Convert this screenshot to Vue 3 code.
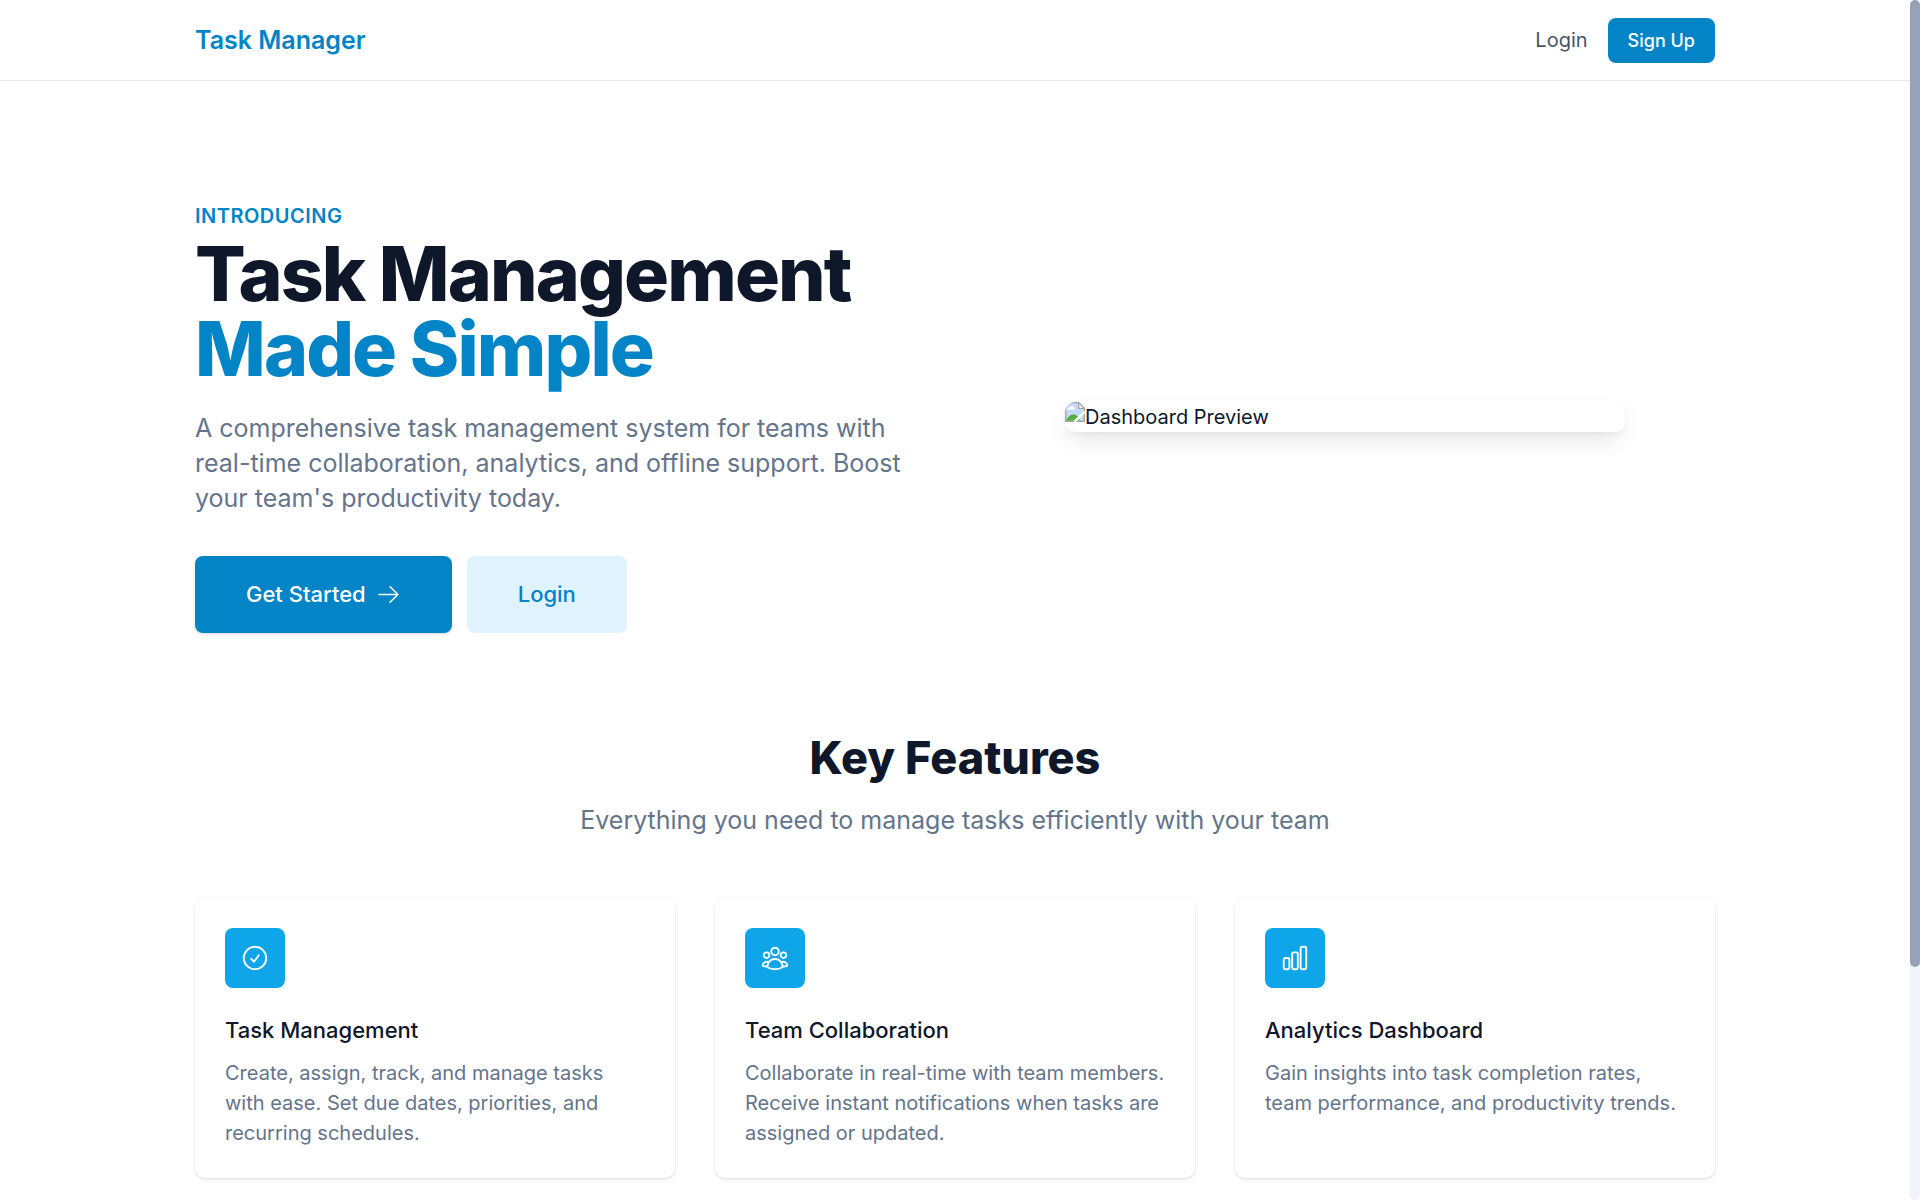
<script setup>
const features = [
  {
    title: 'Task Management',
    text: 'Create, assign, track, and manage tasks with ease. Set due dates, priorities, and recurring schedules.',
    icon: 'M9 12.75L11.25 15 15 9.75M21 12a9 9 0 11-18 0 9 9 0 0118 0z',
  },
  {
    title: 'Team Collaboration',
    text: 'Collaborate in real-time with team members. Receive instant notifications when tasks are assigned or updated.',
    icon: 'M18 18.72a9.094 9.094 0 003.741-.479 3 3 0 00-4.682-2.72m.94 3.198l.001.031c0 .225-.012.447-.037.666A11.944 11.944 0 0112 21c-2.17 0-4.207-.576-5.963-1.584A6.062 6.062 0 016 18.719m12 0a5.971 5.971 0 00-.941-3.197m0 0A5.995 5.995 0 0012 12.75a5.995 5.995 0 00-5.058 2.772m0 0a3 3 0 00-4.681 2.72 8.986 8.986 0 003.74.477m.94-3.197a5.971 5.971 0 00-.94 3.197M15 6.75a3 3 0 11-6 0 3 3 0 016 0zm6 3a2.25 2.25 0 11-4.5 0 2.25 2.25 0 014.5 0zm-13.5 0a2.25 2.25 0 11-4.5 0 2.25 2.25 0 014.5 0z',
  },
  {
    title: 'Analytics Dashboard',
    text: 'Gain insights into task completion rates, team performance, and productivity trends.',
    icon: 'M3 13.125C3 12.504 3.504 12 4.125 12h2.25c.621 0 1.125.504 1.125 1.125v6.75C7.5 20.496 6.996 21 6.375 21h-2.25A1.125 1.125 0 013 19.875v-6.75zM9.75 8.625c0-.621.504-1.125 1.125-1.125h2.25c.621 0 1.125.504 1.125 1.125v11.25c0 .621-.504 1.125-1.125 1.125h-2.25a1.125 1.125 0 01-1.125-1.125V8.625zM16.5 4.125c0-.621.504-1.125 1.125-1.125h2.25C20.496 3 21 3.504 21 4.125v15.75c0 .621-.504 1.125-1.125 1.125h-2.25a1.125 1.125 0 01-1.125-1.125V4.125z',
  },
]
</script>

<template>
  <div class="page">
    <header class="topbar">
      <nav class="container topbar-inner">
        <a class="brand" href="#">Task Manager</a>
        <div class="topbar-actions">
          <a class="nav-link" href="#">Login</a>
          <a class="signup" href="#">Sign Up</a>
        </div>
      </nav>
    </header>

    <main>
      <section class="container hero">
        <div class="hero-copy">
          <p class="eyebrow">Introducing</p>
          <h1 class="headline">
            <span class="headline-line">Task Management</span>
            <span class="headline-line accent">Made Simple</span>
          </h1>
          <p class="lead hero-lead">
            A comprehensive task management system for teams with real-time collaboration,
            analytics, and offline support. Boost your team's productivity today.
          </p>
          <div class="hero-actions">
            <a class="button button-primary" href="#">
              Get Started
              <svg class="arrow" viewBox="0 0 24 24" aria-hidden="true">
                <path d="M13.5 4.5L21 12m0 0l-7.5 7.5M21 12H3" />
              </svg>
            </a>
            <a class="button button-soft" href="#">Login</a>
          </div>
        </div>
        <div class="hero-media">
          <div class="preview">
            <svg class="missing" viewBox="0 0 16 16" aria-hidden="true">
              <path d="M.5.5h11l4 4v11H.5z" fill="#c6d8f7" />
              <path d="M2 6a2 2 0 012-2 2 2 0 013 0 2 2 0 011 2z" fill="#fff" />
              <path d="M1 15v-1c2-3 4-4 6-4s4 2 5 5z" fill="#56ae3a" />
              <path d="M11 .5v4.500h4.500z" fill="#fff" />
              <path
                d="M.5 15.500V.5h10.500l4.500 4.500v10.500zM11 .5v4.500h4.500"
                fill="none"
                stroke="#a0a3a6"
              />
              <path d="M16 7.500L7.500 16" fill="none" stroke="#fff" stroke-width="2" />
            </svg>
            <span>Dashboard Preview</span>
          </div>
        </div>
      </section>

      <section class="container features">
        <h2 class="section-title">Key Features</h2>
        <p class="lead section-lead">Everything you need to manage tasks efficiently with your team</p>
        <div class="cards">
          <article v-for="feature in features" :key="feature.title" class="card">
            <div class="card-icon">
              <svg viewBox="0 0 24 24" aria-hidden="true"><path :d="feature.icon" /></svg>
            </div>
            <h3 class="card-title">{{ feature.title }}</h3>
            <p class="card-text">{{ feature.text }}</p>
          </article>
        </div>
      </section>
    </main>

    <div class="scroll-track" aria-hidden="true">
      <div class="scroll-thumb"></div>
    </div>
  </div>
</template>

<style>
body {
  background: #fff;
}
</style>

<style scoped>
.page {
  box-sizing: border-box;
  min-height: 100vh;
  padding-right: 10px;
  background: #fff;
  color: #0f172a;
  font-family: Inter, 'Liberation Sans', sans-serif;
  font-size: 20px;
  line-height: 30px;
}

a {
  color: inherit;
  text-decoration: none;
}

h1,
h2,
h3,
p {
  margin: 0;
}

.container {
  box-sizing: border-box;
  max-width: 1600px;
  margin: 0 auto;
  padding: 0 40px;
}

.topbar {
  border-bottom: 1px solid #e2e8f0;
}

.topbar-inner {
  display: flex;
  align-items: center;
  justify-content: space-between;
  height: 80px;
}

.brand {
  color: #0284c7;
  font-size: 25px;
  font-weight: 600;
  line-height: 35px;
}

.topbar-actions {
  display: flex;
  align-items: center;
  gap: 20px;
}

.nav-link {
  color: #475569;
}

.signup {
  padding: 10px 20px;
  border-radius: 8px;
  background: #0284c7;
  color: #fff;
  font-size: 18px;
  font-weight: 500;
  line-height: 25px;
}

.hero {
  display: grid;
  grid-template-columns: 1fr 1fr;
  align-items: center;
  gap: 40px;
  padding-top: 120px;
}

.eyebrow {
  color: #0284c7;
  font-weight: 600;
  letter-spacing: 0.025em;
  text-transform: uppercase;
}

.headline {
  margin-top: 5px;
  font-size: 75px;
  font-weight: 800;
  line-height: 75px;
  letter-spacing: -0.025em;
}

.headline-line {
  display: block;
}

.accent {
  color: #0284c7;
}

.lead {
  color: #64748b;
  font-size: 25px;
  line-height: 35px;
}

.hero-lead {
  margin-top: 25px;
}

.hero-actions {
  display: flex;
  gap: 15px;
  margin-top: 40px;
}

.button {
  display: flex;
  align-items: center;
  gap: 10px;
  padding: 20px 50px;
  border: 1px solid transparent;
  border-radius: 8px;
  font-size: 22px;
  font-weight: 500;
  line-height: 35px;
}

.button-primary {
  background: #0284c7 border-box;
  box-shadow: 0 1px 3px rgb(0 0 0 / 0.1), 0 1px 2px rgb(0 0 0 / 0.06);
  color: #fff;
}

.button-soft {
  background: #e0f2fe border-box;
  color: #0284c7;
}

.arrow {
  width: 25px;
  height: 25px;
}

.arrow,
.card-icon svg {
  fill: none;
  stroke: currentColor;
  stroke-width: 1.5;
  stroke-linecap: round;
  stroke-linejoin: round;
}

.hero-media {
  display: flex;
  justify-content: center;
}

.preview {
  display: flex;
  align-items: flex-start;
  width: 100%;
  max-width: 560px;
  overflow: hidden;
  border-radius: 10px;
  box-shadow: 0 10px 25px -3px rgb(0 0 0 / 0.1), 0 4px 6px -2px rgb(0 0 0 / 0.05);
}

.missing {
  width: 20px;
  height: 20px;
}

.features {
  padding-top: 100px;
  padding-bottom: 20px;
}

.section-title {
  font-size: 45px;
  font-weight: 800;
  line-height: 50px;
  text-align: center;
}

.section-lead {
  margin-top: 20px;
  text-align: center;
}

.cards {
  display: grid;
  grid-template-columns: repeat(3, 1fr);
  gap: 40px;
  margin-top: 60px;
}

.card {
  padding: 30px;
  border-radius: 10px;
  background: #fff;
  box-shadow: 0 1px 4px rgb(0 0 0 / 0.1), 0 1px 2px rgb(0 0 0 / 0.06);
}

.card-icon {
  display: flex;
  align-items: center;
  justify-content: center;
  width: 60px;
  height: 60px;
  border-radius: 8px;
  background: #0ea5e9;
  color: #fff;
}

.card-icon svg {
  width: 30px;
  height: 30px;
}

.card-title {
  margin-top: 25px;
  font-size: 22px;
  font-weight: 500;
  line-height: 35px;
}

.card-text {
  margin-top: 10px;
  color: #64748b;
}

.scroll-track {
  position: fixed;
  top: 0;
  right: 0;
  bottom: 0;
  width: 10px;
  border-radius: 5px;
  background: #f1f5f9;
}

.scroll-thumb {
  height: 967px;
  border-radius: 5px;
  background: #94a3b8;
}
</style>
